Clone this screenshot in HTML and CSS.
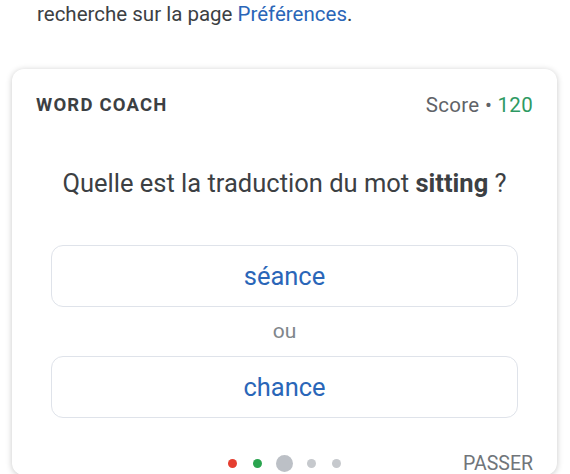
FILE: index.html
```html
<!DOCTYPE html>
<html lang="fr">
<head>
    <meta charset="UTF-8">
    <meta name="viewport" content="width=device-width, initial-scale=1.0">
    <title>Word Coach</title>
    <link rel="stylesheet" href="styles.css">
</head>
<body>
    <p class="intro">recherche sur la page <a href="#">Préférences</a>.</p>

    <div class="card">
        <div class="card-head">
            <span class="title">WORD COACH</span>
            <span class="score">Score • <span class="points">120</span></span>
        </div>

        <p class="question">Quelle est la traduction du mot <b>sitting</b> ?</p>

        <div class="choices">
            <button class="choice">séance</button>
            <span class="or">ou</span>
            <button class="choice">chance</button>
        </div>

        <div class="card-foot">
            <span></span>
            <div class="dots">
                <span class="dot wrong"></span>
                <span class="dot right"></span>
                <span class="dot current"></span>
                <span class="dot"></span>
                <span class="dot"></span>
            </div>
            <span class="skip">PASSER</span>
        </div>
    </div>
</body>
</html>
```

FILE: styles.css
```css
body {
    margin: 0;
    font-family: Roboto, "Liberation Sans", Arial, sans-serif;
    color: #3c4043;
    background: #fff;
    overflow: hidden;
}
.intro {
    margin: 0;
    padding-left: 37px;
    font-size: 20.5px;
    line-height: 28px;
}
.intro a {
    color: #2a66b8;
    text-decoration: none;
}
.card {
    margin: 41px 13px 0 12px;
    padding: 24px 24px 0;
    background: white;
    border-radius: 12px;
    box-shadow: 0 1px 6px rgba(0, 0, 0, 0.22);
}
.card-head {
    display: flex;
    justify-content: space-between;
    align-items: center;
    height: 24px;
}
.title {
    font-size: 18.5px;
    font-weight: bold;
    letter-spacing: 1.2px;
}
.score {
    font-size: 20.5px;
    color: #5f6368;
    letter-spacing: 0.3px;
}
.points {
    color: #2e9a63;
}
.question {
    margin: 51px 0 0;
    text-align: center;
    font-size: 25.5px;
    line-height: 30px;
}
.question b {
    font-weight: bold;
}
.choices {
    display: flex;
    flex-direction: column;
    align-items: center;
    margin: 47px 15px 0;
}
.choice {
    width: 100%;
    height: 62px;
    background: white;
    border: 1px solid #dfe3ea;
    border-radius: 12px;
    font-family: inherit;
    font-size: 25.5px;
    color: #2a66b8;
    cursor: pointer;
}
.or {
    margin: 13px 0 14px;
    font-size: 21px;
    line-height: 22px;
    color: #80868b;
}
.card-foot {
    display: grid;
    grid-template-columns: 1fr auto 1fr;
    align-items: center;
    margin-top: 33px;
    height: 24px;
}
.dots {
    display: flex;
    align-items: center;
    gap: 16px;
}
.dot {
    width: 9px;
    height: 9px;
    border-radius: 50%;
    background: #c6c9cd;
}
.dot.wrong {
    background: #e53e30;
}
.dot.right {
    background: #2aa44f;
}
.dot.current {
    width: 17px;
    height: 17px;
    margin: 0 -2px;
    background: #bcc0c6;
}
.skip {
    justify-self: end;
    font-size: 19.5px;
    color: #70757a;
}
```
